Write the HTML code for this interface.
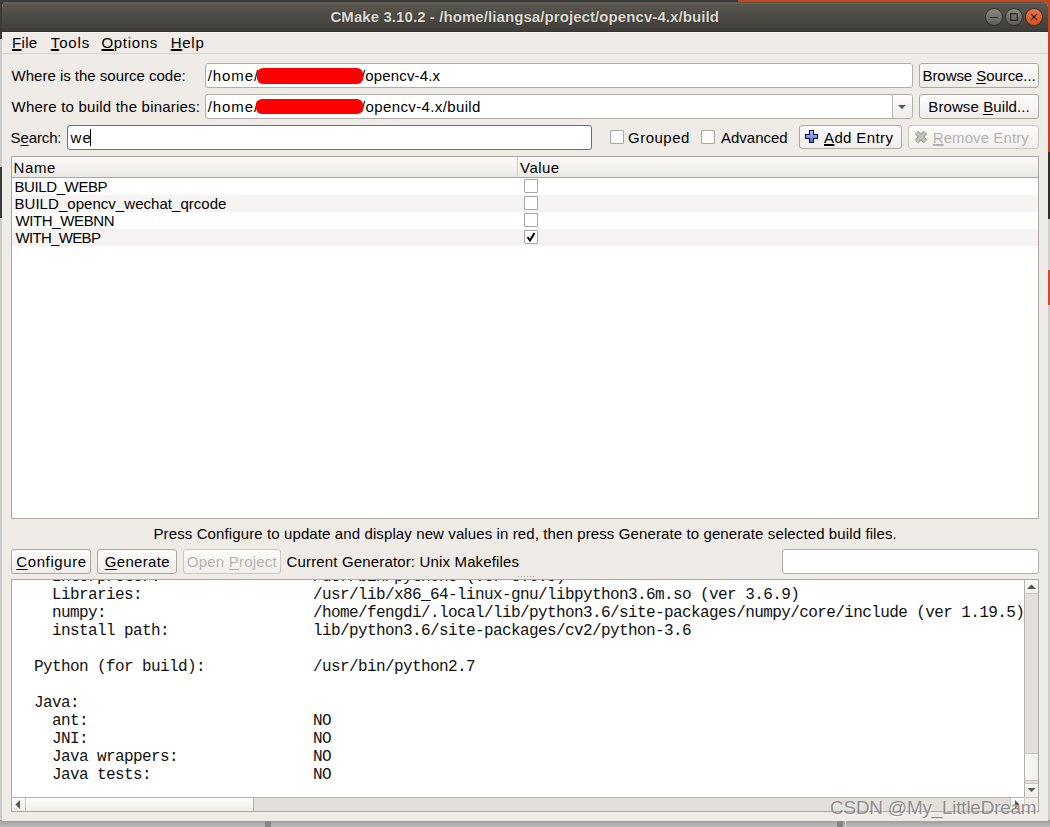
<!DOCTYPE html>
<html><head><meta charset="utf-8">
<style>
*{box-sizing:border-box;margin:0;padding:0}
html,body{width:1050px;height:827px;overflow:hidden;background:#3b3b3b}
body{position:relative;font-family:"Liberation Sans",sans-serif;font-size:15px;color:#000}
.a{position:absolute}
.t{position:absolute;white-space:pre;line-height:1}
.u{text-decoration:underline;text-underline-offset:1px;text-decoration-thickness:2px}
.u1{text-decoration:underline;text-underline-offset:2px;text-decoration-thickness:1px}
.btn{position:absolute;border:1px solid #aca8a2;border-radius:3px;background:linear-gradient(#fdfcfb,#f0ede9)}
.dbtn{position:absolute;border:1px solid #cbc7c2;border-radius:3px;background:linear-gradient(#fdfcfb,#f2efeb)}
.inp{position:absolute;border:1px solid #b1aea9;border-radius:3px;background:#fff}
.cb{position:absolute;width:14px;height:14px;border:1px solid #aaa7a2;border-radius:1px;background:#fff}
.mono{position:absolute;font-family:"Liberation Mono",monospace;font-size:16px;letter-spacing:-0.6px;white-space:pre;line-height:18px;color:#111}
</style></head><body>
<!-- desktop bits -->
<div class="a" style="left:0;top:0;width:1050px;height:827px;background:#3a3a38"></div>
<div class="a" style="left:1040px;top:0;width:10px;height:152px;background:#c4441b"></div>
<div class="a" style="left:1040px;top:152px;width:10px;height:67px;background:#2e2e2e"></div>
<div class="a" style="left:1040px;top:219px;width:10px;height:51px;background:#cfcfcf"></div>
<div class="a" style="left:1040px;top:270px;width:10px;height:35px;background:#d04a22"></div>
<div class="a" style="left:1040px;top:305px;width:10px;height:522px;background:#cdcdcd"></div>
<div class="a" style="left:738px;top:0;width:312px;height:3px;background:#c4441b"></div>
<div class="a" style="left:0;top:39px;width:3px;height:788px;background:#cbcbcb"></div>
<div class="a" style="left:0;top:167px;width:3px;height:51px;background:#3b3b3b"></div>
<div class="a" style="left:0;top:820px;width:1050px;height:7px;background:linear-gradient(#9a9a9a,#bdbdbd)"></div>
<div class="a" style="left:265px;top:821px;width:6px;height:6px;background:#858585"></div>
<div class="a" style="left:837px;top:821px;width:6px;height:6px;background:#858585"></div>
<div class="a" style="left:845px;top:821px;width:1px;height:6px;background:#d8d8d8"></div>

<!-- window -->
<div class="a" style="left:2px;top:2px;width:1046px;height:819px;background:#efebe7;border-radius:5px 5px 0 0;overflow:hidden">
  <div class="a" style="left:0;top:0;width:1046px;height:30px;background:linear-gradient(#5b5951,#3d3c38)"></div>
  <div class="a" style="left:0;top:1px;width:1046px;height:1px;background:#64625a"></div>
  <div class="a" style="left:0;top:29px;width:1046px;height:1px;background:#373632"></div>
</div>

<div class="t" style="left:330.4px;top:9px;letter-spacing:0.081px;font-weight:bold;color:#dfdbd2;text-shadow:0 0 1px #1a1a18">CMake 3.10.2 - /home/liangsa/project/opencv-4.x/build</div>

<!-- window buttons -->
<div class="a" style="left:985px;top:8px;width:18px;height:18px;border-radius:50%;background:#2f2e2b"></div>
<div class="a" style="left:986px;top:9px;width:16px;height:16px;border-radius:50%;background:linear-gradient(#8a8883,#5f5d58)"></div>
<div class="a" style="left:990px;top:16.5px;width:8px;height:1.5px;background:#2f2e2b"></div>
<div class="a" style="left:1005px;top:8px;width:18px;height:18px;border-radius:50%;background:#2f2e2b"></div>
<div class="a" style="left:1006px;top:9px;width:16px;height:16px;border-radius:50%;background:linear-gradient(#8a8883,#5f5d58)"></div>
<svg class="a" style="left:1006px;top:9px" width="16" height="16"><rect x="4.7" y="4.7" width="6.6" height="6.6" fill="none" stroke="#2f2e2b" stroke-width="1.4"/></svg>
<div class="a" style="left:1025px;top:8px;width:18px;height:18px;border-radius:50%;background:#2f2e2b"></div>
<div class="a" style="left:1026px;top:9px;width:16px;height:16px;border-radius:50%;background:linear-gradient(#f0733f,#dd4f1f)"></div>
<svg class="a" style="left:1026px;top:9px" width="16" height="16"><path d="M5 5L11 11M11 5L5 11" stroke="#2a2622" stroke-width="1.1"/><circle cx="8" cy="8" r="1" fill="#1a1612"/></svg>

<!-- menu -->
<div class="a" style="left:2px;top:32px;width:1046px;height:1px;background:#f8f6f3"></div>
<div class="a" style="left:2px;top:53px;width:1046px;height:1px;background:#d5d1cc"></div>

<div class="t" style="left:12.0px;top:35px;letter-spacing:0.333px;"><span class="u">F</span>ile</div>
<div class="t" style="left:50.8px;top:35px;letter-spacing:0.85px;"><span class="u">T</span>ools</div>
<div class="t" style="left:101.5px;top:35px;letter-spacing:0.667px;"><span class="u">O</span>ptions</div>
<div class="t" style="left:170.7px;top:35px;letter-spacing:0.733px;"><span class="u">H</span>elp</div>

<!-- source / build rows -->
<div class="inp" style="left:205px;top:63px;width:708px;height:25px"></div>
<div class="btn" style="left:919px;top:63px;width:120px;height:25px"></div>
<div class="inp" style="left:205px;top:94px;width:708px;height:25px"></div>

<div class="a" style="left:893px;top:95px;width:19px;height:23px;border-radius:0 2px 2px 0;background:linear-gradient(#fdfdfc,#efedea)"></div>
<div class="a" style="left:892px;top:95px;width:1px;height:23px;background:#b9b6b1"></div>
<svg class="a" style="left:896px;top:104px" width="12" height="6"><path d="M2 1H10L6 5Z" fill="#555"/></svg>
<div class="btn" style="left:919px;top:94px;width:120px;height:25px"></div>

<div class="t" style="left:11.6px;top:68px;letter-spacing:-0.008px;">Where is the source code:</div>
<div class="t" style="left:361.0px;top:68px;letter-spacing:0.14px;">/opencv-4.x</div>
<div class="t" style="left:207.8px;top:68px;letter-spacing:0.88px;">/home/</div>
<div class="a" style="left:257px;top:68px;width:106px;height:16px;background:#ff0000;border-radius:6px"></div>
<div class="t" style="left:922.5px;top:68px;letter-spacing:-0.067px;">Browse <span class="u1">S</span>ource...</div>
<div class="t" style="left:11.6px;top:99px;letter-spacing:0.215px;">Where to build the binaries:</div>
<div class="t" style="left:361.0px;top:99px;letter-spacing:0.375px;">/opencv-4.x/build</div>
<div class="t" style="left:207.8px;top:99px;letter-spacing:0.88px;">/home/</div>
<div class="a" style="left:256px;top:99px;width:107px;height:15px;background:#ff0000;border-radius:6px"></div>
<div class="t" style="left:928.3px;top:99px;letter-spacing:0.1px;">Browse <span class="u1">B</span>uild...</div>

<!-- search row -->
<div class="inp" style="left:67px;top:125px;width:525px;height:25px;border-color:#3d79ab"></div>
<div class="a" style="left:90px;top:129px;width:1px;height:17px;background:#000"></div>
<div class="cb" style="left:610px;top:130px"></div>
<div class="cb" style="left:701px;top:130px"></div>
<div class="btn" style="left:799px;top:125px;width:103px;height:24px"></div>
<svg class="a" style="left:804px;top:129px" width="15" height="15"><defs><linearGradient id="pg" x1="0" y1="0" x2="0" y2="1"><stop offset="0" stop-color="#b0c8ff"/><stop offset="1" stop-color="#4f6cc0"/></linearGradient></defs><path d="M5.5 1.5H9.5V5.5H13.5V9.5H9.5V13.5H5.5V9.5H1.5V5.5H5.5Z" fill="url(#pg)" stroke="#0a1250" stroke-width="1.1"/></svg>
<div class="dbtn" style="left:908px;top:125px;width:131px;height:24px"></div>
<svg class="a" style="left:913px;top:129px" width="16" height="16"><path d="M3.5 3.5L12.5 12.5M12.5 3.5L3.5 12.5" stroke="#9c9a97" stroke-width="5"/><path d="M3.9 3.9L12.1 12.1M12.1 3.9L3.9 12.1" stroke="#c2c0bd" stroke-width="3"/></svg>

<div class="t" style="left:10.6px;top:130px;letter-spacing:-0.133px;">S<span class="u1">e</span>arch:</div>
<div class="t" style="left:70.4px;top:130px;letter-spacing:1.2px;">we</div>
<div class="t" style="left:628.0px;top:130px;letter-spacing:0.5px;">Grouped</div>
<div class="t" style="left:721.0px;top:130px;letter-spacing:0.0px;">Advanced</div>
<div class="t" style="left:824.0px;top:130px;letter-spacing:0.375px;"><span class="u">A</span>dd Entry</div>
<div class="t" style="left:932.7px;top:130px;letter-spacing:0.091px;color:#b5b3af"><span class="u">R</span>emove Entry</div>

<!-- table -->
<div class="a" style="left:11px;top:156px;width:1028px;height:363px;border:1px solid #ada8a4;background:#fff"></div>
<div class="a" style="left:12px;top:157px;width:1026px;height:21px;background:linear-gradient(#fbfaf8,#ebe8e4);border-bottom:1px solid #a9a6a1"></div>
<div class="a" style="left:517px;top:157px;width:1px;height:20px;background:#cfccc7"></div>
<div class="a" style="left:12px;top:195px;width:1026px;height:17px;background:#f6f4f2"></div>
<div class="a" style="left:12px;top:229px;width:1026px;height:17px;background:#f6f4f2"></div>
<div class="cb" style="left:524px;top:179px"></div>
<div class="cb" style="left:524px;top:196px"></div>
<div class="cb" style="left:524px;top:213px"></div>
<div class="cb" style="left:524px;top:230px"></div>
<svg class="a" style="left:524px;top:230px" width="14" height="14"><path d="M3.5 7L6 10.5L10.5 3" stroke="#000" stroke-width="2" fill="none"/></svg>

<div class="t" style="left:13.6px;top:160px;letter-spacing:0.6px;">Name</div>
<div class="t" style="left:520.1px;top:160px;letter-spacing:0.45px;">Value</div>
<div class="t" style="left:14.5px;top:179px;letter-spacing:-0.4px;">BUILD_WEBP</div>
<div class="t" style="left:14.5px;top:196px;letter-spacing:0.04px;">BUILD_opencv_wechat_qrcode</div>
<div class="t" style="left:15.5px;top:213px;letter-spacing:-0.378px;">WITH_WEBNN</div>
<div class="t" style="left:15.5px;top:230px;letter-spacing:-0.675px;">WITH_WEBP</div>
<div class="t" style="left:153.5px;top:526px;letter-spacing:0.11px;">Press Configure to update and display new values in red, then press Generate to generate selected build files.</div>

<div class="btn" style="left:11px;top:549px;width:80px;height:25px"></div>
<div class="btn" style="left:97px;top:549px;width:80px;height:25px"></div>
<div class="dbtn" style="left:183px;top:549px;width:98px;height:25px"></div>
<div class="inp" style="left:782px;top:549px;width:257px;height:25px"></div>
<svg class="a" style="left:517px;top:575px" width="18" height="3"><g fill="#9d9a95"><rect x="1" y="1" width="1" height="1"/><rect x="4" y="1" width="1" height="1"/><rect x="7" y="1" width="1" height="1"/><rect x="10" y="1" width="1" height="1"/><rect x="13" y="1" width="1" height="1"/><rect x="16" y="1" width="1" height="1"/></g></svg>

<div class="t" style="left:16.3px;top:554px;letter-spacing:0.6px;"><span class="u1">C</span>onfigure</div>
<div class="t" style="left:104.8px;top:554px;letter-spacing:0.314px;"><span class="u1">G</span>enerate</div>
<div class="t" style="left:186.8px;top:554px;letter-spacing:0.218px;color:#b5b3af">Open <span class="u1">P</span>roject</div>
<div class="t" style="left:286.5px;top:554px;letter-spacing:0.156px;">Current Generator: Unix Makefiles</div>

<!-- output -->
<div class="a" style="left:11px;top:579px;width:1028px;height:233px;border:1px solid #ada8a4;background:#fff;overflow:hidden">
<div class="mono" style="left:4px;top:-12px">    Interpreter:                 /usr/bin/python3 (ver 3.6.9)
    Libraries:                   /usr/lib/x86_64-linux-gnu/libpython3.6m.so (ver 3.6.9)
    numpy:                       /home/fengdi/.local/lib/python3.6/site-packages/numpy/core/include (ver 1.19.5)
    install path:                lib/python3.6/site-packages/cv2/python-3.6

  Python (for build):            /usr/bin/python2.7

  Java:
    ant:                         NO
    JNI:                         NO
    Java wrappers:               NO
    Java tests:                  NO
</div>
</div>
<!-- v scrollbar -->
<div class="a" style="left:1024px;top:580px;width:14px;height:217px;background:#e3e0dc;border-left:1px solid #b5b2ad"></div>
<div class="a" style="left:1025px;top:580px;width:13px;height:14px;background:linear-gradient(#fbfbfa,#efedea);border-bottom:1px solid #c9c6c1"></div>
<svg class="a" style="left:1025px;top:583px" width="13" height="7"><path d="M2 6H11L6.5 1.5Z" fill="#555"/></svg>
<div class="a" style="left:1025px;top:753px;width:13px;height:28px;background:linear-gradient(90deg,#fbfbfa,#efedea);border-bottom:1px solid #c9c6c1;border-top:1px solid #c9c6c1"></div>
<div class="a" style="left:1025px;top:783px;width:13px;height:14px;background:linear-gradient(#fbfbfa,#efedea);border-top:1px solid #c9c6c1"></div>
<svg class="a" style="left:1025px;top:787px" width="13" height="7"><path d="M2.5 1H10.5L6.5 5Z" fill="#555"/></svg>
<!-- h scrollbar -->
<div class="a" style="left:12px;top:797px;width:1012px;height:14px;background:#e3e0dc;border-top:1px solid #b5b2ad"></div>
<div class="a" style="left:12px;top:798px;width:14px;height:13px;background:linear-gradient(#fbfbfa,#efedea);border-right:1px solid #c9c6c1"></div>
<svg class="a" style="left:13px;top:798px" width="10" height="13"><path d="M7 2V11L2.5 6.5Z" fill="#555"/></svg>
<div class="a" style="left:26px;top:798px;width:228px;height:13px;background:linear-gradient(#fcfcfb,#f0eeeb);border-right:1px solid #b5b2ad"></div>
<div class="a" style="left:1010px;top:798px;width:14px;height:13px;background:linear-gradient(#fbfbfa,#efedea);border-left:1px solid #c9c6c1"></div>
<svg class="a" style="left:1012px;top:798px" width="12" height="13"><path d="M3 2V11L7.5 6.5Z" fill="#555"/></svg>
<div class="a" style="left:1024px;top:797px;width:14px;height:14px;background:#efebe7;border-top:1px solid #d0cdc8;border-left:1px solid #d0cdc8"></div>

<!-- watermark -->
<div class="t" style="left:830px;top:798px;font-size:19px;color:rgba(110,110,110,0.75);letter-spacing:-0.25px;text-shadow:1px 1px 0 rgba(255,255,255,0.7)">CSDN @My_LittleDream</div>
</body></html>
